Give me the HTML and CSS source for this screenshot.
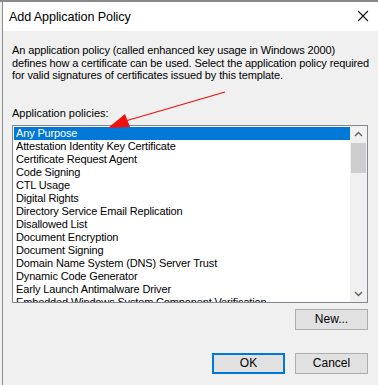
FILE: index.html
```html
<!DOCTYPE html>
<html lang="en">
<head>
  <meta charset="UTF-8" />
  <title>Add Application Policy</title>
  <link rel="stylesheet" href="styles.css">
</head>
<body>
  <div class="backdrop"></div>
  <div class="dialog">
    <div class="titlebar">
      <span class="title">Add Application Policy</span>
      <svg class="close" width="12" height="12" viewBox="0 0 12 12">
        <path d="M1 1 L11 11 M11 1 L1 11" stroke="#111" stroke-width="1.1" fill="none"/>
      </svg>
    </div>
    <div class="content">
      <p class="desc">An application policy (called enhanced key usage in Windows 2000)<br>defines how a certificate can be used. Select the application policy required<br>for valid signatures of certificates issued by this template.</p>
      <div class="field-label">Application policies:</div>
      <div class="listbox">
        <ul class="items">
          <li class="selected">Any Purpose</li>
          <li>Attestation Identity Key Certificate</li>
          <li>Certificate Request Agent</li>
          <li>Code Signing</li>
          <li>CTL Usage</li>
          <li>Digital Rights</li>
          <li>Directory Service Email Replication</li>
          <li>Disallowed List</li>
          <li>Document Encryption</li>
          <li>Document Signing</li>
          <li>Domain Name System (DNS) Server Trust</li>
          <li>Dynamic Code Generator</li>
          <li>Early Launch Antimalware Driver</li>
          <li>Embedded Windows System Component Verification</li>
        </ul>
        <div class="scrollbar">
          <svg class="arrow" width="17" height="17" viewBox="0 0 17 17">
            <path d="M5 10 L8.5 6.5 L12 10" stroke="#606060" stroke-width="1.4" fill="none"/>
          </svg>
          <div class="track"><div class="thumb"></div></div>
          <svg class="arrow" width="17" height="17" viewBox="0 0 17 17">
            <path d="M5 7 L8.5 10.5 L12 7" stroke="#606060" stroke-width="1.4" fill="none"/>
          </svg>
        </div>
      </div>
      <div class="new-row">
        <button type="button" class="btn">New...</button>
      </div>
      <div class="actions">
        <button type="button" class="btn default">OK</button>
        <button type="button" class="btn">Cancel</button>
      </div>
    </div>
    <!-- red annotation arrow pointing at the selected item -->
    <svg class="annotation" width="378" height="385" viewBox="0 0 378 385">
      <line x1="225" y1="92" x2="122" y2="122" stroke="#f01010" stroke-width="1.3"/>
      <polygon points="108,128 125,114 130,127" fill="#f01010"/>
    </svg>
  </div>
</body>
</html>
```

FILE: styles.css
```css
/* Windows 10 style dialog */
body {
  margin: 0;
  background: #f0f0f0;
  font-family: "Liberation Sans", Arial, sans-serif;
  color: #000;
  overflow: hidden;
}
.backdrop {
  height: 2px;
  background: #8a8a8a;
}
.dialog {
  position: relative;
  margin-left: 2px;
  border-left: 1px solid #8c8c8c;
  height: 383px;
  background: #f0f0f0;
}
.titlebar {
  height: 29px;
  background: #fff;
  display: flex;
  align-items: center;
  justify-content: space-between;
  padding: 0 9px 0 6px;
}
.title {
  font-size: 12.6px;
  letter-spacing: -0.1px;
  color: #000;
  margin-top: 1px;
}
.close {
  display: block;
  margin-top: -1px;
}
.content {
  padding: 13px 10px 0 9px;
  font-size: 11px;
}
.desc {
  margin: 0;
  line-height: 12.5px;
  letter-spacing: -0.12px;
  white-space: nowrap;
}
.field-label {
  margin-top: 25px;
  line-height: 13px;
}
.listbox {
  margin-top: 5px;
  height: 176px;
  border: 1px solid #828790;
  background: #fff;
  display: flex;
  overflow: hidden;
}
.items {
  list-style: none;
  margin: 0;
  padding: 1px 0 0 1px;
  flex: 1;
  overflow: hidden;
  letter-spacing: -0.15px;
}
.items li {
  height: 13px;
  line-height: 13px;
  padding-left: 2px;
  white-space: nowrap;
}
.items li.selected {
  background: #0078d7;
  color: #fff;
}
.scrollbar {
  width: 17px;
  background: #f0f0f0;
  display: flex;
  flex-direction: column;
}
.arrow {
  display: block;
}
.track {
  flex: 1;
  padding: 0 1px;
}
.thumb {
  height: 30px;
  background: #cdcdcd;
}
.new-row {
  display: flex;
  justify-content: flex-end;
  margin-top: 6px;
}
.actions {
  display: flex;
  justify-content: flex-end;
  gap: 10px;
  margin-top: 23px;
}
.btn {
  width: 73px;
  height: 21px;
  padding: 0;
  border: 1px solid #adadad;
  background: #e1e1e1;
  font-family: "Liberation Sans", Arial, sans-serif;
  font-size: 12px;
  color: #000;
}
.btn.default {
  border: 2px solid #0078d7;
}
.annotation {
  position: absolute;
  left: -3px;
  top: -2px;
  pointer-events: none;
}
```
